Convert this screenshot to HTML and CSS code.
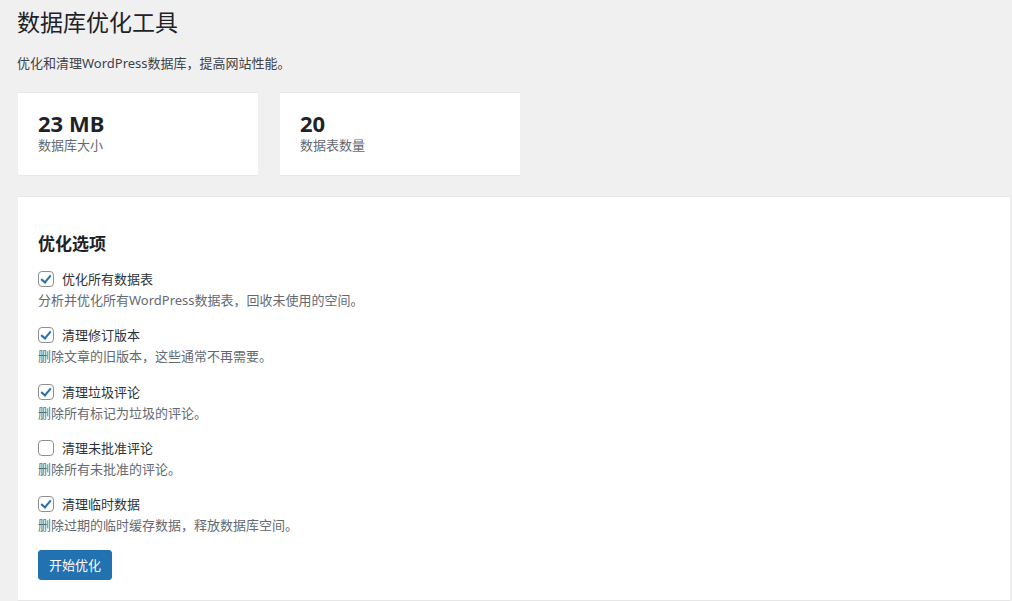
FILE: index.html
```html
<!DOCTYPE html>
<html lang="zh">
<head>
<meta charset="utf-8">
<link rel="stylesheet" href="styles.css">
</head>
<body>
<div class="wrap">
  <h1 class="title">数据库优化工具</h1>
  <p class="intro">优化和清理WordPress数据库，提高网站性能。</p>
  <div class="stats">
    <div class="card">
      <div class="num">23 MB</div>
      <div class="lbl">数据库大小</div>
    </div>
    <div class="card">
      <div class="num">20</div>
      <div class="lbl">数据表数量</div>
    </div>
  </div>
  <div class="panel">
    <h2 class="heading">优化选项</h2>
    <div class="opt">
      <label class="row"><span class="cb on"></span><span>优化所有数据表</span></label>
      <p class="desc">分析并优化所有WordPress数据表，回收未使用的空间。</p>
    </div>
    <div class="opt">
      <label class="row"><span class="cb on"></span><span>清理修订版本</span></label>
      <p class="desc">删除文章的旧版本，这些通常不再需要。</p>
    </div>
    <div class="opt">
      <label class="row"><span class="cb on"></span><span>清理垃圾评论</span></label>
      <p class="desc">删除所有标记为垃圾的评论。</p>
    </div>
    <div class="opt">
      <label class="row"><span class="cb"></span><span>清理未批准评论</span></label>
      <p class="desc">删除所有未批准的评论。</p>
    </div>
    <div class="opt">
      <label class="row"><span class="cb on"></span><span>清理临时数据</span></label>
      <p class="desc">删除过期的临时缓存数据，释放数据库空间。</p>
    </div>
    <button class="btn">开始优化</button>
  </div>
</div>
</body>
</html>
```
FILE: styles.css
```css
* { box-sizing: border-box; }
html, body { margin: 0; padding: 0; }
body {
  background: #f0f0f1;
  font-family: "Noto Sans", "Noto Sans CJK SC", sans-serif;
  color: #3c434a;
  font-size: 13px;
  width: 1012px;
  height: 601px;
  overflow: hidden;
}
.wrap { padding: 7px 0 0 17px; }
.title {
  margin: 0;
  font-size: 23px;
  font-weight: 400;
  line-height: 30px;
  color: #1d2327;
}
.intro {
  margin: 17px 0 0;
  line-height: 18px;
  font-size: 13px;
  color: #3c434a;
}
.stats {
  display: flex;
  gap: 22px;
  margin-top: 21px;
  padding-left: 1px;
}
.card {
  width: 240px;
  height: 82px;
  background: #fff;
  box-shadow: 0 -1px 0 #e6e6e7, 0 1px 1px rgba(0,0,0,0.04);
  padding: 16px 20px;
}
.num {
  font-size: 22px;
  font-weight: 700;
  line-height: 28px;
  color: #1d2327;
}
.lbl {
  font-size: 13px;
  line-height: 16px;
  color: #646970;
}
.panel {
  margin-top: 22px;
  margin-left: 1px;
  margin-right: 2px;
  background: #fff;
  height: 403px;
  padding: 36px 20px 20px;
  box-shadow: 0 -1px 0 #e6e6e7, 0 1px 1px rgba(0,0,0,0.04);
}
.heading {
  margin: 0 0 14px;
  font-size: 17px;
  font-weight: 700;
  line-height: 22px;
  color: #1d2327;
}
.opt { height: 56.3px; }
.row {
  display: flex;
  align-items: center;
  gap: 8px;
  font-size: 13px;
  line-height: 20px;
  color: #2c3338;
}
.cb {
  width: 16px;
  height: 16px;
  border: 1px solid #8c8f94;
  border-radius: 4px;
  background: #fff;
  position: relative;
  flex: none;
}
.cb.on::after {
  content: "";
  position: absolute;
  left: 4px;
  top: 1px;
  width: 4px;
  height: 8px;
  border: solid #2271b1;
  border-width: 0 2px 2px 0;
  transform: rotate(40deg);
}
.desc {
  margin: 2px 0 0;
  font-size: 13px;
  line-height: 18px;
  color: #646970;
}
.btn {
  margin-top: 0;
  background: #2271b1;
  color: #fff;
  border: 1px solid #2271b1;
  border-radius: 3px;
  font-family: inherit;
  font-size: 13px;
  height: 30px;
  padding: 0 10px;
  line-height: 28px;
}
```
